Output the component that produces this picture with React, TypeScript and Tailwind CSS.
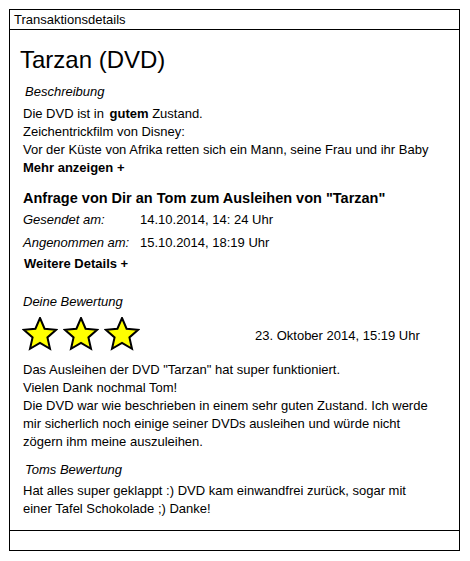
import React from 'react';

const font = { fontFamily: '"Liberation Sans", Arial, sans-serif' };

function starPoints(cx: number, cy: number, outer: number, inner: number) {
  const pts: string[] = [];
  for (let i = 0; i < 10; i++) {
    const r = i % 2 === 0 ? outer : inner;
    const a = (Math.PI / 5) * i - Math.PI / 2;
    pts.push(`${(cx + r * Math.cos(a)).toFixed(2)},${(cy + r * Math.sin(a)).toFixed(2)}`);
  }
  return pts.join(' ');
}

const Star = () => (
  <svg width="36" height="34" viewBox="0 0 36 34" className="shrink-0">
    <polygon
      points={starPoints(18, 18, 17, 7.8)}
      fill="#ffff00"
      stroke="#000"
      strokeWidth="2"
      strokeLinejoin="miter"
    />
  </svg>
);

const Rating = ({ count }: { count: number }) => (
  <div className="flex gap-[5px]">
    {Array.from({ length: count }).map((_, i) => (
      <Star key={i} />
    ))}
  </div>
);

export default function App() {
  return (
    <div className="w-[470px] h-[561px] bg-white text-black" style={font}>
      <div className="ml-[9px] mt-[9px] w-[451px] h-[542px] border border-black flex flex-col">
        {/* Header */}
        <div className="h-[20px] border-b border-black pl-[4px] text-[13px] leading-[19px]">
          Transaktionsdetails
        </div>

        {/* Body */}
        <div className="flex-1 pl-[13px] text-[13px] leading-[18px]">
          <h1 className="mt-[16px] ml-[-3px] text-[24px] leading-[28px] font-normal">
            Tarzan (DVD)
          </h1>

          <div className="mt-[9px] pl-[2px] italic">Beschreibung</div>
          <div className="mt-[4px]">
            <div>
              Die DVD ist in <span className="font-bold ml-[2px]">gutem</span> Zustand.
            </div>
            <div>Zeichentrickfilm von Disney:</div>
            <div>Vor der Küste von Afrika retten sich ein Mann, seine Frau und ihr Baby</div>
            <div className="font-bold">Mehr anzeigen +</div>
          </div>

          <div className="mt-[12px] text-[14.5px] font-bold">
            Anfrage von Dir an Tom zum Ausleihen von "Tarzan"
          </div>
          <div className="grid grid-cols-[117px_1fr] leading-[23px] mt-[1px]">
            <span className="italic">Gesendet am:</span>
            <span>14.10.2014, 14: 24 Uhr</span>
            <span className="italic">Angenommen am:</span>
            <span>15.10.2014, 18:19 Uhr</span>
          </div>
          <div className="mt-[1px] pl-[1px] font-bold">Weitere Details +</div>

          <div className="mt-[20px] italic">Deine Bewertung</div>
          <div className="mt-[7px] flex items-start h-[32px]">
            <div className="ml-[-1px] mt-[-1px]">
              <Rating count={3} />
            </div>
            <span className="ml-[115px] mt-[9px]">23. Oktober 2014, 15:19 Uhr</span>
          </div>

          <div className="mt-[11px] pr-[20px]">
            Das Ausleihen der DVD "Tarzan" hat super funktioniert.
            <br />
            Vielen Dank nochmal Tom!
            <br />
            Die DVD war wie beschrieben in einem sehr guten Zustand. Ich werde mir sicherlich
            noch einige seiner DVDs ausleihen und würde nicht zögern ihm meine auszuleihen.
          </div>

          <div className="mt-[10px] pl-[2px] italic">Toms Bewertung</div>
          <div className="mt-[3px] w-[405px]">
            Hat alles super geklappt :) DVD kam einwandfrei zurück, sogar mit einer Tafel
            Schokolade ;) Danke!
          </div>
        </div>

        {/* Footer */}
        <div className="h-[20px] border-t border-black" />
      </div>
    </div>
  );
}
